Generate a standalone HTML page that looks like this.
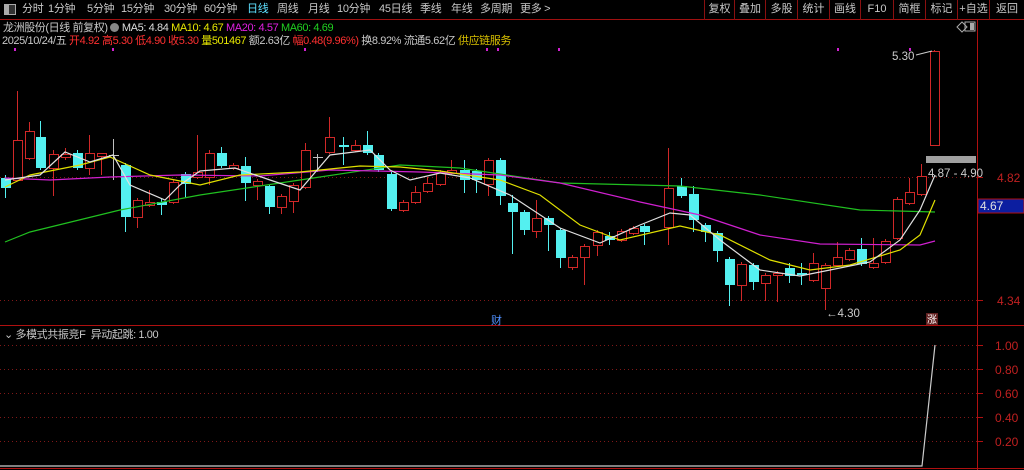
<!DOCTYPE html>
<html><head><meta charset="utf-8">
<style>
*{margin:0;padding:0;box-sizing:border-box}
body{width:1024px;height:470px;background:#000;overflow:hidden;font-family:"Liberation Sans","Noto Sans CJK SC",sans-serif;font-size:11px;color:#c8c8c8;position:relative}
.top{position:absolute;left:0;top:0;width:1024px;height:20px;background:#000;border-bottom:1px solid #a01010}
.tabs span{position:absolute;top:0;line-height:19px;color:#c8c8c8;font-size:11px;letter-spacing:-0.3px;white-space:nowrap}
.b{position:absolute;top:0;height:20px;border-left:1px solid #8a1010;line-height:19px;color:#c8c8c8;text-align:center;font-size:11px}
.t{position:absolute;white-space:nowrap;line-height:14px;font-size:11px;letter-spacing:-0.4px}
</style></head><body>
<div class="top">
<span style="position:absolute;left:4px;top:4px;width:12px;height:11px;border:1px solid #aaa;background:linear-gradient(90deg,#aaa 40%,#333 40%)"></span>
<div class="tabs">
<span style="left:22px">分时</span><span style="left:48px">1分钟</span><span style="left:87px">5分钟</span><span style="left:121px">15分钟</span><span style="left:164px">30分钟</span><span style="left:204px">60分钟</span><span style="left:247px;color:#5ee0ff">日线</span><span style="left:277px">周线</span><span style="left:308px">月线</span><span style="left:337px">10分钟</span><span style="left:379px">45日线</span><span style="left:420px">季线</span><span style="left:451px">年线</span><span style="left:480px">多周期</span><span style="left:520px">更多 &gt;</span>
</div>
<div class="b" style="left:704px;width:30px">复权</div><div class="b" style="left:734px;width:31px">叠加</div><div class="b" style="left:765px;width:32px">多股</div><div class="b" style="left:797px;width:32px">统计</div><div class="b" style="left:829px;width:31px">画线</div><div class="b" style="left:860px;width:33px">F10</div><div class="b" style="left:893px;width:32px">简框</div><div class="b" style="left:925px;width:32px">标记</div><div class="b" style="left:957px;width:32px">+自选</div><div class="b" style="left:989px;width:35px">返回</div>
</div>
<div class="t" style="left:3px;top:21px">龙洲股份(日线 前复权) <span style="display:inline-block;width:9px;height:9px;border-radius:5px;background:#888;vertical-align:-1px"></span> <span style="color:#ddd">MA5: 4.84</span> <span style="color:#e8e800">MA10: 4.67</span> <span style="color:#e020e0">MA20: 4.57</span> <span style="color:#20d020">MA60: 4.69</span></div>
<div class="t" style="left:2px;top:34px">2025/10/24/五 <span style="color:#ff3030">开4.92 高5.30 低4.90 收5.30</span> <span style="color:#e8e800">量501467</span> 额2.63亿 <span style="color:#ff3030">幅0.48(9.96%)</span> 换8.92% 流通5.62亿 <span style="color:#d8c000">供应链服务</span></div>
<div class="t" style="left:4px;top:328px">⌄ 多模式共振竞F &nbsp;异动起跳: 1.00</div>
<svg width="1024" height="470" style="position:absolute;left:0;top:0" id="s">
<line x1="977.5" y1="20" x2="977.5" y2="470" stroke="#b01010"/>
<line x1="0" y1="325.5" x2="1024" y2="325.5" stroke="#b01010"/>
<line x1="0" y1="468.5" x2="1024" y2="468.5" stroke="#b01010"/>
<g stroke="#801818" stroke-dasharray="1,3">
<line x1="0" y1="177.5" x2="977" y2="177.5"/><line x1="0" y1="300.5" x2="977" y2="300.5"/>
<line x1="0" y1="345.5" x2="977" y2="345.5"/><line x1="0" y1="369.5" x2="977" y2="369.5"/><line x1="0" y1="393.5" x2="977" y2="393.5"/><line x1="0" y1="417.5" x2="977" y2="417.5"/><line x1="0" y1="441.5" x2="977" y2="441.5"/>
</g>
<g stroke="#b01010"><line x1="977" y1="177.5" x2="983" y2="177.5"/><line x1="977" y1="300.5" x2="983" y2="300.5"/><line x1="977" y1="345.5" x2="983" y2="345.5"/><line x1="977" y1="369.5" x2="983" y2="369.5"/><line x1="977" y1="393.5" x2="983" y2="393.5"/><line x1="977" y1="417.5" x2="983" y2="417.5"/><line x1="977" y1="441.5" x2="983" y2="441.5"/></g>
<g fill="#c02020" font-size="12" font-family="Liberation Sans">
<text x="997" y="182">4.82</text><text x="997" y="305">4.34</text>
<text x="995" y="350">1.00</text><text x="995" y="374">0.80</text><text x="995" y="398">0.60</text><text x="995" y="422">0.40</text><text x="995" y="446">0.20</text>
</g>
<rect x="978" y="199" width="46" height="14" fill="#0c1ea0" stroke="#b01010"/>
<text x="980" y="210" fill="#e0e0e0" font-size="12" font-family="Liberation Sans">4.67</text>
<g fill="#d020d0"><rect x="14" y="48" width="2" height="3"/><rect x="112" y="48" width="2" height="3"/><rect x="304" y="48" width="2" height="3"/><rect x="486" y="48" width="2" height="3"/><rect x="497" y="48" width="2" height="3"/><rect x="558" y="48" width="2" height="3"/><rect x="837" y="48" width="2" height="3"/><rect x="909" y="48" width="2" height="3"/></g>
<path d="M957 27 L962 22 L967 27 L962 32 Z" fill="none" stroke="#aaa"/>
<rect x="965" y="22" width="10" height="9" fill="none" stroke="#aaa"/><rect x="970" y="23" width="4" height="7" fill="#aaa"/>
<g id="c"></g>
<polyline fill="none" stroke="#20c020" stroke-width="1.2" points="5,242 30,232 120,210 200,195 300,180 400,165 460,168 560,183 680,186 760,195 860,210 935,212"/>
<polyline fill="none" stroke="#d020d0" stroke-width="1.2" points="5,178 50,180 110,177 180,175 260,176 330,170 420,172 500,175 560,183 640,202 700,215 760,235 820,244 920,245 935,241"/>
<polyline fill="none" stroke="#e0e000" stroke-width="1.2" points="5,187 30,175 80,165 110,157 150,175 200,185 240,175 300,172 360,166 400,167 440,171 500,180 540,195 580,225 620,240 680,226 720,235 770,260 810,270 850,265 900,250 920,235 935,200"/>
<polyline fill="none" stroke="#e0e0e0" stroke-width="1.2" points="5,180 40,175 65,152 90,162 113,155 130,185 165,200 180,185 200,171 235,168 270,180 300,190 330,155 370,150 390,170 410,180 440,173 470,178 510,195 560,228 600,243 640,225 670,213 690,215 720,240 760,270 800,276 830,270 870,262 900,240 920,210 935,175"/>
<rect x="926" y="156" width="50" height="7" fill="#a0a0a0"/>
<text x="928" y="177" fill="#ccc" font-size="11.5">4.87 - 4.90</text>
<text x="892" y="60" fill="#ccc" font-size="11.5">5.30</text><line x1="916" y1="55" x2="932" y2="51" stroke="#ccc"/>
<text x="826" y="317" fill="#ccc" font-size="11.5">←4.30</text>
<text x="491" y="324" fill="#5090ff" font-size="11">财</text>
<rect x="926" y="313" width="12" height="12" fill="#602020"/><text x="927" y="323" fill="#fff" font-size="10">涨</text>
<polyline fill="none" stroke="#ccc" stroke-width="1.2" points="0,466 922,466 935,345"/>
</svg>
<script>
var d=[[5,178,188,175,198,0],[17,140,180,91,180,1],[29,131,158,122,160,1],[40,137,168,121,170,0],[53,154,168,150,196,1],[65,154,157,148,160,1],[77,153,168,150,170,0],[89,153,168,135,175,1],[101,153,156,153,175,1],[113,155,156,139,180,2],[125,165,217,163,232,0],[137,200,217,198,228,1],[149,202,205,190,207,1],[161,202,205,198,215,0],[173,182,202,180,204,1],[185,174,184,172,198,0],[197,172,177,135,179,1],[209,153,177,150,185,1],[221,153,166,147,168,0],[233,165,168,163,170,1],[245,166,183,157,201,0],[257,181,185,179,200,1],[269,186,207,184,214,0],[281,196,207,194,214,1],[293,185,201,183,213,1],[305,150,187,143,189,1],[317,157,158,154,172,2],[329,137,152,117,154,1],[343,145,147,137,165,0],[355,145,150,140,152,1],[367,145,153,131,155,0],[378,155,170,153,172,0],[391,174,209,172,211,0],[403,202,210,200,212,1],[415,192,202,186,204,1],[427,183,191,177,193,1],[440,172,184,170,186,1],[451,170,173,160,175,1],[464,170,180,160,193,0],[476,171,180,169,193,0],[488,160,184,158,196,1],[500,160,196,158,205,0],[512,203,212,195,254,0],[524,212,230,210,235,0],[536,218,231,200,238,1],[548,218,225,216,251,0],[560,230,258,228,268,0],[572,257,267,255,270,1],[584,246,257,244,285,1],[597,232,245,230,256,1],[609,236,240,232,245,0],[621,231,240,229,242,1],[633,228,233,226,235,1],[644,226,232,224,245,0],[668,188,227,148,245,1],[681,186,196,178,198,0],[693,194,220,186,232,0],[705,225,232,223,242,0],[717,233,251,231,262,0],[729,259,285,257,306,0],[741,264,285,262,301,1],[753,265,282,263,290,0],[765,275,283,273,301,1],[777,273,275,271,302,1],[789,268,276,263,283,0],[801,273,275,263,285,0],[813,263,280,253,282,1],[825,265,288,263,310,1],[837,257,265,242,267,1],[849,250,259,248,261,1],[861,249,264,238,266,0],[873,263,267,238,269,1],[885,241,262,239,264,1],[897,199,238,197,240,1],[909,192,203,178,205,1],[921,176,194,164,196,1],[934,51,145,50,145,1]];
var s='';d.forEach(function(c){var x=c[0],t=c[1],b=c[2],col=c[5]==0?'#54f0f0':(c[5]==2?'#c0c0c0':'#d02828');
s+='<line x1="'+(x+.5)+'" y1="'+c[3]+'" x2="'+(x+.5)+'" y2="'+c[4]+'" stroke="'+col+'"/>';
if(c[5]==0)s+='<rect x="'+(x-4)+'" y="'+t+'" width="10" height="'+Math.max(1,b-t)+'" fill="'+col+'"/>';
else if(c[5]==2)s+='<line x1="'+(x-4)+'" y1="'+(t+.5)+'" x2="'+(x+6)+'" y2="'+(t+.5)+'" stroke="'+col+'"/>';
else s+='<rect x="'+(x-3.5)+'" y="'+(t+.5)+'" width="9" height="'+Math.max(1,b-t)+'" fill="#000" stroke="'+col+'"/>';});
document.getElementById('c').innerHTML=s;
</script>
</body></html>
